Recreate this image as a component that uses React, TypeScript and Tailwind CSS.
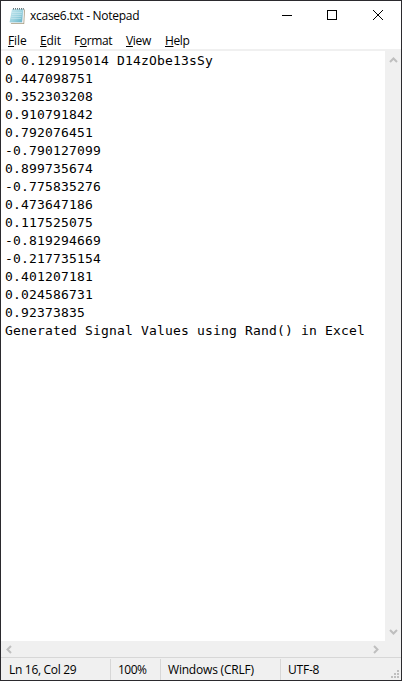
import React from "react";

const lines = [
  "0 0.129195014 D14zObe13sSy",
  "0.447098751",
  "0.352303208",
  "0.910791842",
  "0.792076451",
  "-0.790127099",
  "0.899735674",
  "-0.775835276",
  "0.473647186",
  "0.117525075",
  "-0.819294669",
  "-0.217735154",
  "0.401207181",
  "0.024586731",
  "0.92373835",
  "Generated Signal Values using Rand() in Excel",
];

const menus = [
  { pre: "", key: "F", post: "ile", cls: "w-[32px] tracking-[-0.1px]" },
  { pre: "", key: "E", post: "dit", cls: "w-[34px] tracking-[-0.1px]" },
  { pre: "F", key: "o", post: "rmat", cls: "w-[52px] tracking-[-0.35px]" },
  { pre: "", key: "V", post: "iew", cls: "w-[39px] tracking-[-0.3px]" },
  { pre: "", key: "H", post: "elp", cls: "w-[40px] tracking-[-0.4px]" },
];

function NotepadIcon() {
  return (
    <svg width="16" height="17" viewBox="0 0 16 17" className="shrink-0">
      <defs>
        <linearGradient id="page" x1="0" y1="0" x2="1" y2="1">
          <stop offset="0" stopColor="#c9e9f0" />
          <stop offset="0.55" stopColor="#9bd2df" />
          <stop offset="1" stopColor="#5fb0c6" />
        </linearGradient>
      </defs>
      <path d="M4 1.5h12l-.8 14.5H2z" fill="#a99c80" />
      <path d="M3.5 1.5h11.8l-.8 13.8H1z" fill="#e9eef0" />
      <path d="M3 1h11.3L13 14.3H0.6z" fill="url(#page)" />
      <path d="M3 4.5h10M2.7 6.5h10M2.4 8.5h10M2.1 10.5h10" stroke="#dff2f6" strokeWidth=".6" opacity=".7" />
      <path d="M4.5 0v1.6M6.5 0v1.6M8.5 0v1.6M10.5 0v1.6M12.5 0v1.6M14.3 0v1.6" stroke="#56686c" strokeWidth=".9" />
    </svg>
  );
}

function Chevron({ d }: { d: string }) {
  return (
    <svg width="9" height="9" viewBox="0 0 9 9" fill="none" stroke="#bfbfbf" strokeWidth="2">
      <path d={d} />
    </svg>
  );
}

function TitleBar() {
  return (
    <header className="flex h-[30px] shrink-0 items-center pl-2">
      <NotepadIcon />
      <span className="ml-[5px] w-[230px] whitespace-pre text-[12px] leading-[16px] tracking-[-0.27px]">
        xcase6.txt - Notepad
      </span>
      <svg width="140" height="30" viewBox="0 0 140 30" fill="none" stroke="#000" shapeRendering="crispEdges" className="shrink-0">
        <path d="M22 14.5h10" />
        <rect x="67.5" y="9.5" width="9" height="9" />
        <path d="M113 9l10 10M123 9l-10 10" shapeRendering="auto" />
      </svg>
    </header>
  );
}

export default function App() {
  return (
    <div className="flex h-[681px] w-[402px] flex-col overflow-hidden border border-[#2b2a2e] bg-white font-['Open_Sans','Noto_Sans',sans-serif] text-black">
      <TitleBar />
      <nav className="flex h-[20px] shrink-0 border-b-2 border-[#f0f0f0] pl-[7px] text-[12px] leading-[20px]">
        {menus.map((m) => (
          <span key={m.key} className={m.cls}>
            {m.pre}
            <span className="underline decoration-1 underline-offset-1">{m.key}</span>
            {m.post}
          </span>
        ))}
      </nav>
      <div className="flex h-[590px] shrink-0">
        <main className="w-[384px] pl-1 pt-px font-['DejaVu_Sans_Mono',monospace] text-[13px] leading-[18px] tracking-[0.173px]">
          {lines.map((line, i) => (
            <div key={i} className="whitespace-pre">{line}</div>
          ))}
        </main>
        <aside className="flex w-4 flex-col items-center justify-between bg-[#f0f0f0] pb-[5px] pt-[5px]">
          <Chevron d="M1 6l3.5-3.5L8 6" />
          <Chevron d="M1 3l3.5 3.5L8 3" />
        </aside>
      </div>
      <div className="flex h-4 shrink-0 items-center justify-between bg-[#f0f0f0] pl-1 pr-[21px]">
        <Chevron d="M6 1L2.5 4.5 6 8" />
        <Chevron d="M3 1l3.5 3.5L3 8" />
      </div>
      <footer className="flex h-[23px] shrink-0 border-t border-[#d7d7d7] bg-[#f0f0f0] pt-px text-[12px] leading-[21px]">
        <span className="w-[110px] border-r border-[#d7d7d7] pl-2 tracking-[-0.3px]">Ln 16, Col 29</span>
        <span className="w-[50px] border-r border-[#d7d7d7] pl-[7px] tracking-[-0.5px]">100%</span>
        <span className="w-[120px] border-r border-[#d7d7d7] pl-[7px] tracking-[-0.2px]">Windows (CRLF)</span>
        <span className="w-[109px] pl-[7px] tracking-[-0.2px]">UTF-8</span>
        <svg width="11" height="21" viewBox="0 0 11 21" fill="#bfbfbf" shapeRendering="crispEdges">
          <path d="M7 11h2v2H7zM4 14h2v2H4zM7 14h2v2H7zM1 17h2v2H1zM4 17h2v2H4zM7 17h2v2H7z" />
        </svg>
      </footer>
    </div>
  );
}
